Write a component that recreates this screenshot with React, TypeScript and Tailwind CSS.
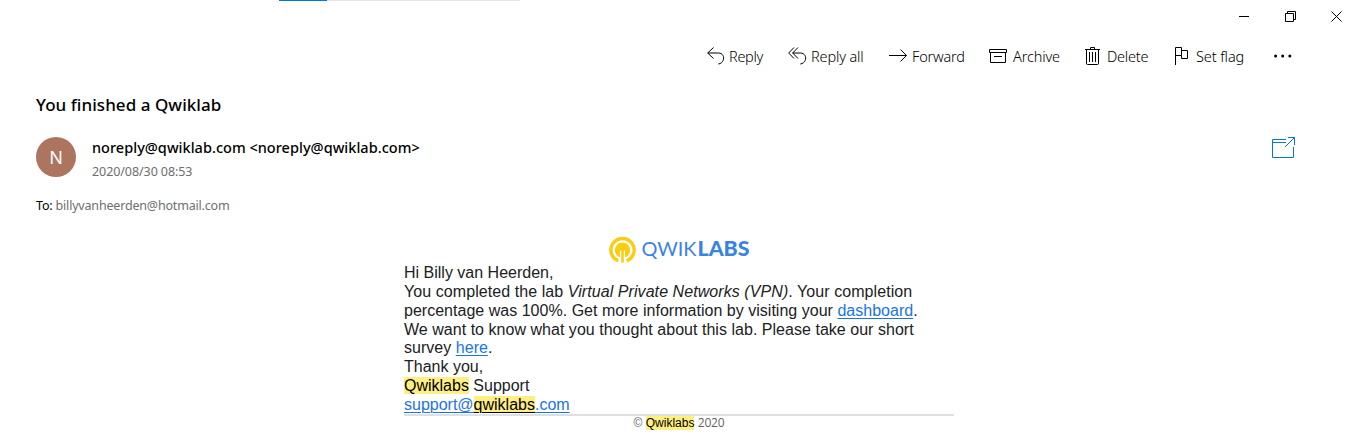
import type { ReactNode } from "react";

function Icon({ w, h, children, className = "" }: { w: number; h: number; children: ReactNode; className?: string }) {
  return (
    <svg width={w} height={h} viewBox={`0 0 ${w} ${h}`} fill="none" stroke="currentColor" className={`shrink-0 ${className}`}>
      {children}
    </svg>
  );
}

function Action({ icon, label, className }: { icon: ReactNode; label: string; className: string }) {
  return (
    <button className={`flex h-6 shrink-0 items-center text-left text-[14.5px] font-light whitespace-nowrap ${className}`}>
      {icon}
      <span className="pt-0.5">{label}</span>
    </button>
  );
}

const Mark = ({ children, className = "" }: { children: ReactNode; className?: string }) => (
  <span className={`bg-[#ffee80] text-black ${className}`}>{children}</span>
);

const Link = ({ children }: { children: ReactNode }) => (
  <a className="text-[#1a73e8] underline decoration-1 underline-offset-2">{children}</a>
);

export default function App() {
  return (
    <div className="h-[439px] w-[1359px] overflow-hidden bg-white font-['Noto_Sans','Open_Sans',sans-serif] text-black">
      <div className="ml-[279px] h-px w-[241px] bg-[#e6e6e6]">
        <div className="h-px w-12 bg-[#0078d7]" />
      </div>

      <div className="flex h-[31px] items-center justify-end gap-[35px] pr-[17px]">
        <Icon w={11} h={11}>
          <path d="M0 5.5H10" />
        </Icon>
        <Icon w={11} h={11}>
          <path d="M.5 2.5H8.5V10.5H.5ZM2.5 2.5V.5H10.5V8.5H8.5" />
        </Icon>
        <Icon w={11} h={11}>
          <path d="M.5 .5L10.5 10.5M10.5 .5L.5 10.5" />
        </Icon>
      </div>

      <div className="ml-[707px] flex h-12 items-center text-black">
        <Action
          className="w-[81px] gap-1 tracking-[-0.3px]"
          label="Reply"
          icon={
            <Icon w={18} h={18}>
              <path d="M6.5 .5L.7 6L6.5 11.5M.7 6H11.5C18.3 6 18.5 16 11.3 17" />
            </Icon>
          }
        />
        <Action
          className="w-[101px] gap-1 tracking-[-0.15px]"
          label="Reply all"
          icon={
            <Icon w={19} h={18}>
              <path d="M6 .5L.7 6L6 11.5M10 .5L4.7 6L10 11.5M4.7 6H12.5C19.3 6 19.5 16 12.3 17" />
            </Icon>
          }
        />
        <Action
          className="w-[100px] gap-1 tracking-[-0.2px]"
          label="Forward"
          icon={
            <Icon w={19} h={14}>
              <path d="M0 6.5H17.5M11.5 .5L17.5 6.5L11.5 12.5" />
            </Icon>
          }
        />
        <Action
          className="w-24 gap-1.5 tracking-[-0.15px]"
          label="Archive"
          icon={
            <Icon w={18} h={14}>
              <path d="M.5 .5H17.5V3.5H.5ZM1.5 3.5V13.5H16.5V3.5M5 7.5H13" />
            </Icon>
          }
        />
        <Action
          className="w-[90px] gap-[7px] tracking-[-0.25px]"
          label="Delete"
          icon={
            <Icon w={15} h={18}>
              <path d="M0 2.5H15M5.5 2.5V.5H9.5V2.5M1.5 2.5V16.5Q1.5 17.5 2.5 17.5H12.5Q13.5 17.5 13.5 16.5V2.5M4.5 5V15M7.5 5V15M10.5 5V15" />
            </Icon>
          }
        />
        <Action
          className="w-[99px] gap-[7px] tracking-[-0.1px]"
          label="Set flag"
          icon={
            <Icon w={14} h={18}>
              <path d="M.5 18V.5H6.5V8.5H.5M6.5 3.5H12.5V11.5H6.5V8.5" />
            </Icon>
          }
        />
        <svg width="18" height="4" viewBox="0 0 18 4" fill="currentColor">
          <circle cx="1.6" cy="2" r="1.5" />
          <circle cx="8.7" cy="2" r="1.5" />
          <circle cx="15.8" cy="2" r="1.5" />
        </svg>
      </div>

      <h1 className="mt-[13px] ml-9 h-[23px] text-[17px] leading-6 font-medium tracking-[0.05px]">You finished a Qwiklab</h1>

      <div className="mt-[21px] flex h-10 pr-[63px] pl-9">
        <div className="flex size-10 shrink-0 items-center justify-center rounded-full bg-[#ad7460] text-[18px] text-white">N</div>
        <div className="ml-4 flex flex-1 flex-col">
          <p className="h-6 text-[14.5px] leading-5 font-medium tracking-[0.02px]">noreply@qwiklab.com &lt;noreply@qwiklab.com&gt;</p>
          <p className="pt-0.5 text-[12.5px] leading-[25px] tracking-[-0.08px] text-[#6e6e6e]">2020/08/30 08:53</p>
        </div>
        <Icon w={24} h={21} className="text-[#0078d7]">
          <path d="M14 2.5H.5V20.5H21.5V10M.5 5.5H14M16 .5H22.5V8M22.5 .5L13 10" />
        </Icon>
      </div>

      <p className="mt-[19px] ml-9 h-[19px] text-[12.5px] leading-5 tracking-[-0.18px]">
        To: <span className="text-[#6e6e6e]">billyvanheerden@hotmail.com</span>
      </p>

      <main className="mt-[21px] ml-[404px] w-[550px] font-['Liberation_Sans',Arial,sans-serif] text-[#202124]">
        <div className="flex h-7 justify-center">
          <svg width="142" height="28" viewBox="0 -.6 142 28" className="ml-[2px]">
            <path d="M9.3 24.3A11.6 11.6 0 1 1 17.7 24.3" fill="none" stroke="#f8cd12" strokeWidth="3.4" />
            <circle cx="13.5" cy="13.5" r="7.7" fill="#f8cd12" />
            <path d="M13.5 14V28" stroke="white" strokeWidth="5" />
            <path d="M13.5 11V26" stroke="#f8cd12" strokeWidth="2.6" />
            <text x="32.5" y="19.4" fontFamily="Lato" fontSize="20" fill="#3983e5" textLength="55" lengthAdjust="spacingAndGlyphs">QWIK</text>
            <text x="88.5" y="19.4" fontFamily="Lato" fontSize="20" fontWeight="900" fill="#3983e5" textLength="52" lengthAdjust="spacingAndGlyphs">LABS</text>
          </svg>
        </div>
        <div className="h-[150px] text-[16px] leading-[18.85px] whitespace-nowrap">
          <p>Hi Billy van Heerden,</p>
          <p>
            <span className="tracking-[0.07px]">You completed the lab <em>Virtual Private Networks (VPN)</em>. Your completion</span>
            <br />
            <span className="tracking-[0.02px]">
              percentage was 100%. Get more information by visiting your <Link>dashboard</Link>.
            </span>
          </p>
          <p className="tracking-[0.03px]">
            We want to know what you thought about this lab. Please take our short
            <br />
            survey <Link>here</Link>.
          </p>
          <p>Thank you,</p>
          <p>
            <Mark>Qwiklabs</Mark> Support
          </p>
          <p>
            <Link>
              support@<Mark className="underline decoration-1 underline-offset-2">qwiklabs</Mark>.com
            </Link>
          </p>
        </div>
        <footer className="border-t-2 border-[#dfe0e3] text-center text-[12px] leading-[14px] text-[#5f6368]">
          © <Mark>Qwiklabs</Mark> <span className="font-['Open_Sans',sans-serif] tracking-[-0.2px]">2020</span>
        </footer>
      </main>
    </div>
  );
}
